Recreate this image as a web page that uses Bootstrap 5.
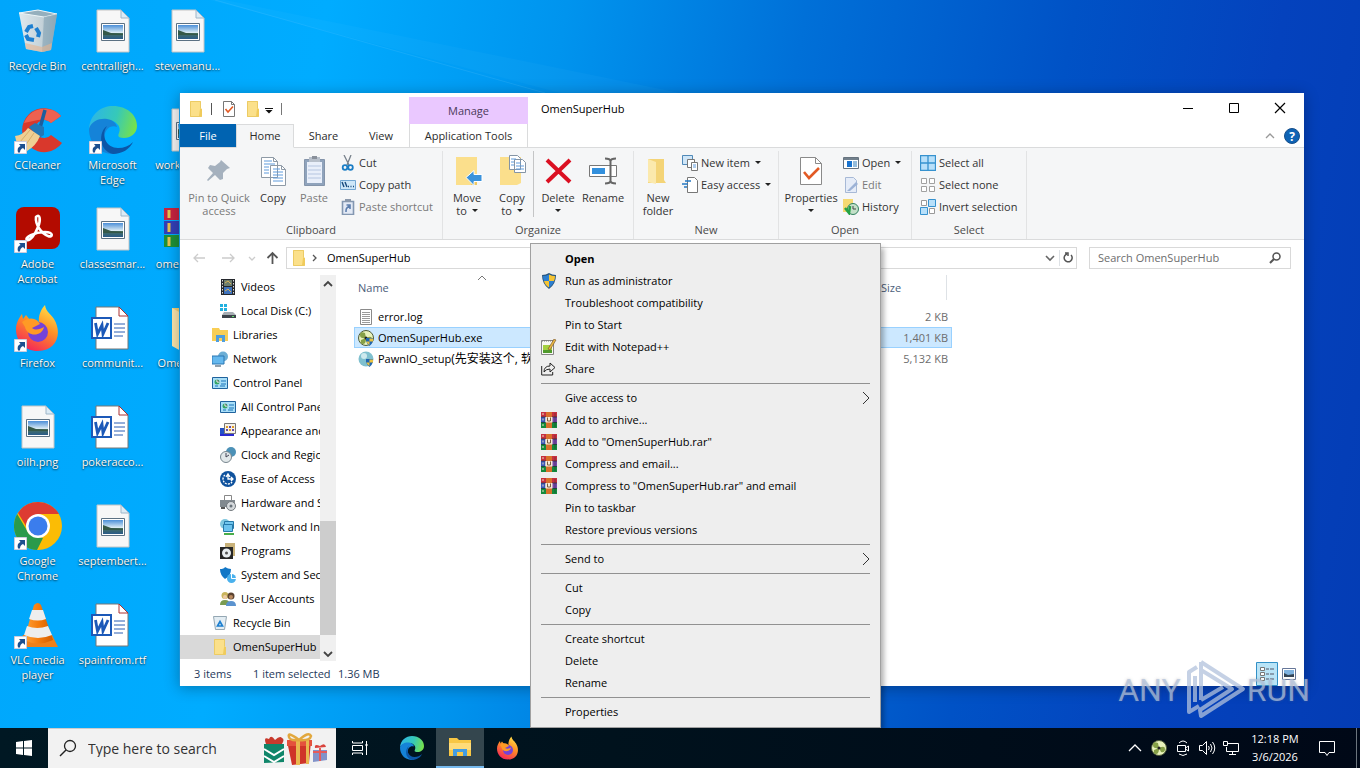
<!DOCTYPE html>
<html lang="en">
<head>
<meta charset="utf-8">
<meta name="viewport" content="width=device-width, initial-scale=1">
<title>Desktop</title>
<link rel="stylesheet" href="https://cdn.jsdelivr.net/npm/bootstrap@5.3.0/dist/css/bootstrap.min.css">
<script src="https://cdn.jsdelivr.net/npm/bootstrap@5.3.0/dist/js/bootstrap.bundle.min.js"></script>
<style>
:root{--line:#dadbdc;--ribbon:#f5f6f7}
body{font-family:"Open Sans","Noto Sans","Noto Sans CJK SC",sans-serif;font-size:11px;line-height:16px;color:#000;height:100vh;overflow:hidden;
 background:linear-gradient(100deg,#00a6fb 0%,#00acff 22%,#0094ee 38%,#0070d8 54%,#0052c6 72%,#0442bd 86%,#043cb4 100%)}
button,input{font:inherit;color:inherit;border:0;background:none;padding:0;border-radius:0}
svg{display:block;flex:none;overflow:visible}
a{color:inherit;text-decoration:none}
.s16{width:16px;height:16px}.s24{width:24px;height:24px}.s32{width:32px;height:32px}.s48{width:48px;height:48px}
.beam{position:absolute;inset:0;width:100%;height:100%}
.desk-icons{display:grid;grid-auto-flow:column;grid-template-rows:repeat(7,99px);grid-auto-columns:75px;padding-top:7px;width:225px}
.desk-icons a{display:flex;flex-direction:column;align-items:center;gap:3px;color:#fff;line-height:15px;text-align:center;text-shadow:0 1px 2px rgba(0,0,0,.7),0 0 1px rgba(0,0,0,.4)}
.pic-wrap{position:relative}
.arrow-mark{position:absolute;left:0;bottom:0;width:13px;height:13px}
.win{position:absolute;left:179px;right:56px;top:93px;bottom:82px;background:#fff;border-left:1px solid #1a93d8;box-shadow:0 2px 14px rgba(0,0,0,.3)}
.title-row{height:31px;padding-right:1px}
.quick{width:229px}
.manage-tab{width:119px;height:27px;background:#eac8ff;color:#4b3a5a;line-height:28px}
.win-title{padding-left:13px}
.cap-btn{width:46px;height:30px;display:grid;place-items:center}
.tab-row{height:24px;border-bottom:1px solid var(--line)}
.tab-row button{height:24px;color:#2b2b2b}
.tab-row .file-tab{background:#0063b1;color:#fff;width:56px;height:23px}
.tab-row .home-tab{width:58px;background:var(--ribbon);border:1px solid var(--line);border-bottom-color:var(--ribbon)}
.tab-row .share-tab{width:59px}.tab-row .view-tab{width:56px}
.tab-row .tools-tab{width:119px;border:solid var(--line);border-width:0 1px}
.ribbon{background:var(--ribbon);height:92px;border-bottom:1px solid var(--line);color:#333}
.rgroup{border-right:1px solid #e2e3e4;margin-top:3px;display:flex;flex-direction:column;justify-content:space-between}
.rgroup>span{text-align:center;color:#4a4a4a;line-height:18px}
.g-clip{width:263px}.g-org{width:191px}.g-new{width:145px}.g-open{width:133px}.g-sel{width:115px}
.w30{width:30px}.w42{width:42px}.w48{width:48px}.w52{width:52px}.w64{width:64px}.w78{width:78px}
.big{line-height:13px;display:flex;flex-direction:column;align-items:center;gap:4px;padding-top:4px;color:#333;white-space:nowrap}
.smalls{padding-top:1px}
.sm{display:flex;align-items:center;gap:3px;height:22px;white-space:nowrap}
.caret{display:inline-block;border:3px solid transparent;border-top-color:#222;border-bottom:0;vertical-align:3px;margin-left:5px}
.dim,.big.dim{color:#7a7a7a}
.addr-row{height:35px;padding:0 13px 0 8px}
.nav-btns{width:98px}
.addr{height:22px;border:1px solid #d9d9d9}
.find-box{width:202px;margin-left:12px}
.find-box input{width:150px}
.nav-pane{width:140px;overflow:hidden}
.nav-pane a{display:flex;align-items:center;gap:5px;height:24px;padding-left:32px;white-space:nowrap}
.nav-pane a.sub{padding-left:40px}
.nav-pane a.here{background:#d9d9d9}
.sbar{width:16px;background:#f0f0f0}
.sbar i{display:block;background:#cdcdcd;height:114px}
.file-pane{padding-left:18px}
.files{width:598px;table-layout:fixed;border-collapse:separate;border-spacing:0}
.files .c-name{width:240px}.files .c-size{width:76px}
.files th{font-weight:400;color:#4c607a;height:31px;padding:0 5px;line-height:25px;vertical-align:top}
.files td{height:21px;padding:0 3px;border:1px solid transparent;line-height:19px;white-space:nowrap}
.files td svg{align-self:center}
.files td+td{color:#6d6d6d}
.files .sel td{background:#cce8ff;border-color:#99d1ff}
.files .sel td+td{border-left:0}.files .sel td:not(:last-child){border-right:0}
.han{font-size:12px}
.status{height:25px;color:#1e395b;padding-left:14px}
.count{width:59px}.chosen{width:85px}
.ctx{position:absolute;left:530px;bottom:40px;width:351px;background:#eee;border:1px solid #a0a0a0;padding:4px 0;box-shadow:4px 4px 5px -1px rgba(0,0,0,.3);z-index:5}
.ctx button{display:flex;align-items:center;width:100%;height:22px;padding:0 10px;text-align:left}
.ctx .ic{width:24px}
.ctx hr{margin:3px 10px;height:1px;border:0;background:#919191;opacity:1}
.taskbar{position:absolute;left:0;right:0;bottom:0;height:40px;background:linear-gradient(90deg,#001823,#00121d 45%,#000817);color:#fff;z-index:6}
.tsearch{width:288px;background:#f2f2f2;height:40px;border-top:1px solid #ccc;color:#333}
.tsearch input{width:172px;font-size:14px;outline:0}
.tsearch input::placeholder,.addr input::placeholder{color:#333;opacity:1}
.addr input::placeholder{color:#6d6d6d}
.tbtn{width:48px;height:40px;display:grid;place-items:center}
.tbtn.on{background:#34464e;border-bottom:2px solid #76b9ed}
.tray button{width:24px;height:40px;display:grid;place-items:center}
.tray .notify{width:40px;margin-right:9px}
.show-desk{width:4px}
.clock{width:64px;line-height:18px;text-align:center}
.mark-any{position:absolute;right:50px;bottom:46px;font:32px/64px Roboto,"Liberation Sans",sans-serif;color:rgba(178,194,220,.72);z-index:4;text-shadow:0 0 3px rgba(120,120,120,.35);pointer-events:none}
</style>
</head>
<body>
<svg width="0" height="0" class="position-absolute" aria-hidden="true"><defs>
<linearGradient id="gEdge" x1="0" x2="1" y1=".3" y2=".5"><stop offset="0" stop-color="#2cb5e8"/><stop offset=".55" stop-color="#36c9b8"/><stop offset="1" stop-color="#76e14b"/></linearGradient>
<linearGradient id="gFox" x1=".8" y1="0" x2=".3" y2="1"><stop offset="0" stop-color="#ffe34a"/><stop offset=".45" stop-color="#ff9125"/><stop offset="1" stop-color="#f4235a"/></linearGradient>
<linearGradient id="gSky" x2="0" y2="1"><stop offset="0" stop-color="#4b8fd8"/><stop offset=".55" stop-color="#dcecf4"/><stop offset=".6" stop-color="#46705f"/><stop offset="1" stop-color="#2a5b8a"/></linearGradient>
<linearGradient id="gCone" x2="1"><stop offset="0" stop-color="#ffa23a"/><stop offset=".5" stop-color="#f57c0d"/><stop offset="1" stop-color="#d35c00"/></linearGradient>
<linearGradient id="gBin" x2="1"><stop offset="0" stop-color="#dfe9ee"/><stop offset=".6" stop-color="#c4d2d9"/><stop offset="1" stop-color="#8fa7b4"/></linearGradient>
<symbol id="bin" viewBox="0 0 48 48"><path d="M5 6l19-3 19 4-6 36-9 2-16-3z" fill="url(#gBin)"/><path d="M5 6l19-3 19 4-13 3z" fill="#95afbd" stroke="#edf5f8"/><path d="M30 10l13-3-6 36-9 2z" fill="#8ba8b8" opacity=".7"/><path d="M11 36l17 4 10-4-1 7-9 2-16-3z" fill="#e6b48f" opacity=".6"/><g fill="none" stroke="#1d7fd0" stroke-width="4"><path d="M12 25l3-5 4-1M22 21l3 5-1 4M20 33l-6-1-2-4"/></g></symbol>
<symbol id="img" viewBox="0 0 48 48"><path d="M8 3h24l8 8v34H8z" fill="#f7f7f7" stroke="#c4c4c4"/><path d="M32 3v8h8z" fill="#dcebf5" stroke="#9fb6c8"/><path d="M12.500 16.500h23v17h-23z" fill="#fff" stroke="#5c7183"/><path d="M14 18h20v14H14z" fill="url(#gSky)"/><path d="M14 23l8 3 12 1v1H14z" fill="#355848"/></symbol>
<symbol id="doc" viewBox="0 0 48 48"><path d="M7 3h23l9 9v33H7z" fill="#fff" stroke="#777"/><path d="M30 3v9h9z" fill="#fff" stroke="#a33"/><path d="M25 20h11M25 24h11M25 28h11M25 32h9" stroke="#2b5fb4"/><path d="M3 14h19v20H3z" fill="#fff" stroke="#1c59b8" stroke-width="2"/><path d="M6.500 19l2 11 4.500-9 1 9 5-11" fill="none" stroke="#1c59b8" stroke-width="2.800"/></symbol>
<symbol id="shortcut" viewBox="0 0 13 13"><path d="M.5.5h12v12H.5z" fill="#fff" stroke="#ccd"/><path d="M4 11.500C3 8 4 6 6.500 5L5 3h6v6L9 7C7 8 6 9 6 11.500z" fill="#1c4f8f"/></symbol>
<symbol id="cc" viewBox="0 0 48 48"><path d="M47 10A22 22 0 1 0 48 37L37 29a9 9 0 1 1 0-12z" fill="#d9382c"/><path d="M47 10A22 22 0 0 0 10 17L24 14q8-2 13 3z" fill="#ee6150"/><path d="M31 4l-5 18" stroke="#1d5e9d" stroke-width="3.500"/><path d="M15 21l6-4 9 4 0 8-5 3z" fill="#2277b6"/><path d="M14 22l12 8q-4 10-13 15Q4 45 1 30q8-1 13-8z" fill="#efcf93"/><path d="M16 24L6 36M20 27l-9 13" stroke="#d8ae69"/></symbol>
<symbol id="edge" viewBox="0 0 48 48"><path d="M0 23C1 8 12 0 24 0c14 0 24 9 24 20 0 8-7 12-13 12-7 0-6-3-5-5 3-7-4-13-11-13C9 14 2 18 0 23z" fill="url(#gEdge)"/><path d="M0 23C2 15 11 12 18 13c6 1 9 4 10 8-8-3-14 5-12 13 2 7 6 11 11 14C11 49 0 38 0 23z" fill="#1583d8"/><path d="M18 20c-7 10 0 22 11 22 6 0 11-2 15-6-3 7-11 12-20 12C10 45 9 26 18 20z" fill="#0c56a7"/></symbol>
<symbol id="pdf" viewBox="0 0 48 48"><rect x="2" y="2" width="44" height="42" rx="8" fill="#b30b00"/><path d="M22 12c4-4 5 3 2 10-3 8-8 14-11 13-3-2 7-8 18-8 9 0 8 6 3 4-6-2-13-11-12-19z" fill="none" stroke="#fff" stroke-width="2.600"/></symbol>
<symbol id="fox" viewBox="0 0 48 48"><path d="M24 47C10 47 2 37 2 25c0-6 3-11 6-15l1 5 3-4 4 5c4 0 6 0 9 3-1-7 2-14 6-18 1 7 6 9 9 14 9 15 2 32-16 32z" fill="url(#gFox)"/><circle cx="24" cy="28" r="10" fill="#7542d8"/><path d="M8 18c8-6 15-4 18 2l-8 4c4 3 8 1 12-1-2 10-17 10-19 0z" fill="#ff9a25"/></symbol>
<symbol id="chrome" viewBox="0 0 48 48"><circle cx="24" cy="24" r="24" fill="#fbbc05"/><path d="M24 0a24 24 0 0 1 21 12H24L12 24 4 11A24 24 0 0 1 24 0z" fill="#dd3b32"/><path d="M3.200 12L15 32l14 4-6 12A24 24 0 0 1 3.200 12z" fill="#2a9a4b"/><circle cx="24" cy="24" r="12" fill="#fff"/><circle cx="24" cy="24" r="9.500" fill="#3b7ded"/></symbol>
<symbol id="cone" viewBox="0 0 48 48"><path d="M9 34h29l6 12H5z" fill="#f08018"/><path d="M20 4q4-4 7 0l12 35q-15 7-29 0z" fill="url(#gCone)"/><path d="M18 9h11l3 9q-8 3-17 0zM13 25q10 4 21 0l4 9q-14 6-28 0z" fill="#eee"/></symbol>
<symbol id="rar" viewBox="0 0 16 16"><path d="M0 0h16v5H0z" fill="#c7303f"/><path d="M0 5h4.500v5H0z" fill="#3a57b8"/><path d="M10.500 5H16v5h-5.500z" fill="#7546a8"/><path d="M0 10h16v6H0z" fill="#148a3c"/><path d="M0 5h16M0 10.500h16" stroke="#22303a" stroke-width=".7"/><path d="M2 1v14" stroke="#e8dfc0" stroke-dasharray="2 3.500"/><path d="M14 1v14" stroke="#17202a" opacity=".35"/><path d="M5 0h6v16H5z" fill="#d9702b"/><path d="M4.500 5h7v5.500h-7z" fill="#f6ead6"/><path d="M6.500 5.500V9h3V5.500" fill="none" stroke="#7a5a3c"/></symbol>
<symbol id="rarbig" viewBox="0 0 48 48"><path d="M0 3h36v12H0z" fill="#c72440"/><path d="M0 16h36v13H0z" fill="#343fb8"/><path d="M0 30h36v12H0z" fill="#1e9138"/><path d="M5 5v8M5 18v9M5 32v9" stroke="#e9c24f" stroke-width="3"/></symbol>
<symbol id="folder" viewBox="0 0 16 16"><path d="M2 0h11v7l1 1v8H2z" fill="#fbe08a"/><path d="M2.500.5h10v7l1 1v7h-11z" fill="none" stroke="#eccb64"/><path d="M12 8h2v7h-3z" fill="#f0cb5b"/></symbol>
<symbol id="foldbig" viewBox="0 0 48 48"><path d="M8 4h32v34l4 4H14z" fill="#f2ce74"/><path d="M8 4l9 5v38l-9-5z" fill="#fbe6ac"/></symbol>
<symbol id="check" viewBox="0 0 16 16"><path d="M2.500.5h8l3 3v12h-11z" fill="#fff" stroke="#777"/><path d="M10.500.5v3h3" fill="none" stroke="#777"/><path d="M4.500 8l2.500 3L12 5.500" fill="none" stroke="#e25a24" stroke-width="1.600"/></symbol>
<symbol id="checkbig" viewBox="0 0 32 32"><path d="M5.500 2.500h15l6 6v21h-21z" fill="#fff" stroke="#8a8a8a"/><path d="M20.500 2.500v6h6" fill="none" stroke="#8a8a8a"/><path d="M9 17l5 6 10-10" fill="none" stroke="#e25a24" stroke-width="2.600"/></symbol>
<symbol id="pin" viewBox="0 0 32 32"><path d="M18 5l9 8-3 1-4 4v6l-3 1-5-5-7 6-1-1 6-7-5-5 2-3 5 1 5-4z" fill="#a5b1be"/></symbol>
<symbol id="copy" viewBox="0 0 32 32"><g fill="#fff" stroke="#8e9aa6"><path d="M4.500 2.500h12l4 4v16h-16zM13.500 10.500h11l4 4v16h-15z"/><path d="M16.500 2.500v4h4M24.500 10.500v4h4" fill="none"/></g><path d="M7 6h8M7 9h11M7 12h5M7 15h5M7 18h5M16 14h7M16 17h10M16 20h10M16 23h10M16 26h10" stroke="#5f9bdc"/></symbol>
<symbol id="paste" viewBox="0 0 32 32"><path d="M6.500 4.500h20v26h-20z" fill="#8fa3bc" stroke="#8494aa"/><path d="M9 7h15v21H9z" fill="#e9effa"/><path d="M11 2h11v5H11z" fill="#b7bfca"/><path d="M14 1h5v3h-5z" fill="#888f9a"/><path d="M10 11h13M10 15h13M10 19h13M10 23h13" stroke="#b5c5e0"/></symbol>
<symbol id="cut" viewBox="0 0 16 16"><path d="M4 0l5 10M11 0L7 10" stroke="#77818b" stroke-width="1.300"/><circle cx="5" cy="12.500" r="2.300" fill="none" stroke="#1c7ec5" stroke-width="1.800"/><circle cx="10.500" cy="12.500" r="2.300" fill="none" stroke="#1c7ec5" stroke-width="1.800"/></symbol>
<symbol id="path" viewBox="0 0 16 16"><path d="M.5 3.500h15v9H.5z" fill="#cde7f8" stroke="#72a7d2"/><path d="M2 5l2 5M5 5l2 5M8 9.500h1M10.500 9.500h1M13 9.500h1" stroke="#174a7c" stroke-width="1.400"/></symbol>
<symbol id="psc" viewBox="0 0 16 16"><path d="M2.500 2.500h11v13h-11z" fill="#e2e9f5" stroke="#8397b1" stroke-width="1.600"/><path d="M5 0h6v3H5z" fill="#8a98ab"/><path d="M6 13c0-3 0-4 3.500-6M6.500 6H10v4" fill="none" stroke="#5e7fae" stroke-width="1.600"/></symbol>
<symbol id="move" viewBox="0 0 32 32"><path d="M5 2h21v26l-4 2H5z" fill="#fbdf8c"/><path d="M22 25h4v5h-6z" fill="#eec862"/><path d="M15 22.500l8-7v4h8v7h-8v4z" fill="#3a92dc" stroke="#fff"/></symbol>
<symbol id="copyto" viewBox="0 0 32 32"><path d="M4 2h21v26l-4 2H4z" fill="#fbdf8c"/><g fill="#fff" stroke="#8494a5"><path d="M13.500.5h8l3 3v11h-11zM18.500 4.500h8l3 3v10h-11z"/></g><path d="M15 4h5M15 7h3M15 10h3M20 8h5M20 11h8M20 14h8" stroke="#5f9bdc"/></symbol>
<symbol id="del" viewBox="0 0 32 32"><path d="M5 5l23 22M28 5L5 27" stroke="#db1022" stroke-width="4"/></symbol>
<symbol id="ren" viewBox="0 0 32 32"><path d="M2.500 10.500h27v11h-27z" fill="#fff" stroke="#777"/><path d="M5 13h13v6H5z" fill="#3390dd"/><path d="M23.500 5v22M18 3.500q5 0 5.500 2.500.5-2.500 5.500-2.500M18 28.500q5 0 5.500-2.500.5 2.500 5.500 2.500" fill="none" stroke="#666" stroke-width="2"/></symbol>
<symbol id="newf" viewBox="0 0 32 32"><path d="M6 4h16v21l2 3H6z" fill="#f4d477"/><path d="M6 4l8 3v22l-8-2z" fill="#fbe9ad"/></symbol>
<symbol id="newi" viewBox="0 0 16 16"><path d="M.5.5h10v9H.5z" fill="#cfe6f8" stroke="#5089b8"/><path d="M5.500 4.500h7v8h-7z" fill="#fff" stroke="#777"/><path d="M9.500 7.500h6v8h-6z" fill="#fff" stroke="#777"/><path d="M11 10h3M11 12h3" stroke="#5f9bdc"/></symbol>
<symbol id="easy" viewBox="0 0 16 16"><path d="M5.500.5h7l3 3v12h-10z" fill="#fff" stroke="#777"/><path d="M0 7h6M3 4h6M2 10h3" stroke="#2478c2" stroke-width="1.500"/></symbol>
<symbol id="opn" viewBox="0 0 16 16"><path d="M.5 2.500h15v11H.5z" fill="#fff" stroke="#66737f"/><path d="M1 3h14v2H1z" fill="#72808c"/><path d="M4 6h5v6H4z" fill="#1973cf"/><path d="M10 7h4M10 9h4M10 11h4" stroke="#2b7ab9"/></symbol>
<symbol id="edit" viewBox="0 0 16 16"><path d="M2.500.5h8l3 3v12h-11z" fill="#e5ecf8" stroke="#a7b9d6"/><path d="M4 14l9-9 2 2-8 7z" fill="#9cb2d6"/></symbol>
<symbol id="hist" viewBox="0 0 16 16"><path d="M0 0h10v13H0z" fill="#f5d972"/><circle cx="10" cy="10" r="5.500" fill="#c3e0c8" stroke="#31805f"/><path d="M2 9l4 5 1-7" fill="none" stroke="#24a245" stroke-width="2.500"/><path d="M10 7v3h3" fill="none" stroke="#444"/></symbol>
<symbol id="sall" viewBox="0 0 16 16"><path d="M.5.5h15v15H.5zM8 1v14M1 8h14" fill="#b8e0fa" stroke="#3692cf" stroke-width="1.300"/></symbol>
<symbol id="snone" viewBox="0 0 16 16"><path d="M1.500 1.500h5v5h-5zM9.500 1.500h5v5h-5zM1.500 9.500h5v5h-5zM9.500 9.500h5v5h-5z" fill="#fff" stroke="#a1a1a1"/></symbol>
<symbol id="sinv" viewBox="0 0 16 16"><path d="M1.500 1.500h5v5h-5zM9.500 9.500h5v5h-5z" fill="#fff" stroke="#999"/><path d="M8.500.5h7v7h-7zM.5 8.500h7v7h-7z" fill="#b8e0fa" stroke="#3692cf"/></symbol>
<symbol id="video" viewBox="0 0 16 16"><path d="M1 0h14v16H1z" fill="#25282d"/><path d="M2.500 1v14M13.500 1v14" stroke="#ddd" stroke-dasharray="1.500 1.500"/><path d="M4 1h8v6H4z" fill="#6c7d6d"/><path d="M4 8h8v7H4z" fill="#3f73bd"/><path d="M5 4l3-2 3 3M5 12l3-2 3 3" stroke="#d8b258" fill="none"/></symbol>
<symbol id="disk" viewBox="0 0 16 16"><path d="M0 1h3v3H0zM4 1h3v3H4zM0 5h3v3H0zM4 5h3v3H4z" fill="#22b0df"/><path d="M4 9h9l3 3v3H2v-3z" fill="#a6adb3"/><path d="M2 12h14v3H2z" fill="#3d444b"/><path d="M12 13.500h2" stroke="#62e269"/></symbol>
<symbol id="lib" viewBox="0 0 16 16"><path d="M0 1h7l1 2h8v11H0z" fill="#f9ce55"/><path d="M4 15V8h9v7h-3v-4H7v4z" fill="#4f9ede"/></symbol>
<symbol id="net" viewBox="0 0 16 16"><circle cx="11" cy="5.500" r="5" fill="#6caed5"/><path d="M0 5h12v8H0z" fill="#65b8ee" stroke="#2b77b3"/><path d="M3 15h6" stroke="#6c8090" stroke-width="1.500"/></symbol>
<symbol id="cp" viewBox="0 0 16 16"><path d="M.5 2.500h15v11H.5z" fill="#a8def8" stroke="#20639d"/><circle cx="5" cy="7" r="2.500" fill="#37a568"/><path d="M5 4.500V7h2.500" stroke="#fff"/><path d="M9 6h5M9 9h5M3 11h3M8 11h5" stroke="#1a74b9"/></symbol>
<symbol id="look" viewBox="0 0 16 16"><path d="M0 5h11v8H0z" fill="#2351c6"/><path d="M4.500.5h11v10h-11z" fill="#f5f2e8" stroke="#777"/><path d="M6 3h2v2H6zM12 3h2v2h-2zM9 6h2v2H9z" fill="#e39b27"/><path d="M9 3h2v2H9zM6 6h2v2H6zM12 6h2v2h-2z" fill="#654aa8"/><path d="M0 12h14" stroke="#2a2ad0" stroke-width="2"/></symbol>
<symbol id="clk" viewBox="0 0 16 16"><circle cx="11" cy="5" r="5" fill="#4c91b7"/><circle cx="6" cy="10" r="5.500" fill="#e2e8ea" stroke="#77868e"/><path d="M6 6v4l3-2" fill="none" stroke="#445"/></symbol>
<symbol id="ease" viewBox="0 0 16 16"><circle cx="8" cy="8" r="8" fill="#0f529d"/><path d="M8 3v5h5M11 6l2 2-2 2M6 6L8 3l2 3" fill="none" stroke="#fff" stroke-width="1.300"/><path d="M5 4a5 5 0 1 0 7 7" fill="none" stroke="#fff" stroke-dasharray="2 1" stroke-width="1.400"/></symbol>
<symbol id="hw" viewBox="0 0 16 16"><path d="M4.500.5h7v6h-7z" fill="#fff" stroke="#888"/><path d="M0 5h15v7H0z" fill="#81898f"/><circle cx="11" cy="11" r="4.500" fill="#d5d9dc" stroke="#72787d"/><circle cx="11" cy="11" r="1.500" fill="#69737b"/><path d="M1 13h4" stroke="#555" stroke-width="2"/></symbol>
<symbol id="ni" viewBox="0 0 16 16"><circle cx="5" cy="5" r="5" fill="#81c8df"/><path d="M4.500 2.500h9v7h-9z" fill="#71c6ee" stroke="#267aaa"/><path d="M3.500 5.500h9v7h-9z" fill="#6cc3ee" stroke="#267aaa"/><path d="M4 15h10" stroke="#49ad49" stroke-width="2"/></symbol>
<symbol id="prog" viewBox="0 0 16 16"><path d="M5 0h10v13H5z" fill="#c9b27a"/><path d="M0 4h13v12H0z" fill="#262626"/><circle cx="6.500" cy="10" r="4.500" fill="#e9eef1"/><circle cx="6.500" cy="10" r="1.500" fill="#555"/></symbol>
<symbol id="sec" viewBox="0 0 16 16"><path d="M0 2q4 0 5-2 3 2 6 2 0 7-6 10Q0 8 0 2z" fill="#1277c6"/><circle cx="11.500" cy="11.500" r="4.500" fill="#4ab1ed"/><path d="M11.500 7v4.500H16" fill="none" stroke="#fff"/></symbol>
<symbol id="usr" viewBox="0 0 16 16"><circle cx="5" cy="4.500" r="3.500" fill="#c9b55d"/><circle cx="11" cy="5" r="3.500" fill="#5b4331"/><circle cx="5" cy="6" r="2" fill="#edc9a3"/><circle cx="11" cy="6" r="2" fill="#b98a60"/><path d="M0 14q0-5 5-5t5 5z" fill="#7a9c52"/><path d="M6 15q0-5 5-5t5 5z" fill="#5b93cf"/></symbol>
<symbol id="bins" viewBox="0 0 16 16"><path d="M1.500 1.500h13l-2 13h-9z" fill="#e3edf3" stroke="#94a7b3"/><path d="M5.500 11L8 6.500l2.500 4.500z" fill="none" stroke="#1d7fd0" stroke-width="1.700"/></symbol>
<symbol id="log" viewBox="0 0 16 16"><path d="M2.500.5h11v15h-11z" fill="#fff" stroke="#8a8a8a"/><path d="M4 3.500h8M4 5.500h8M4 7.500h8M4 9.500h8M4 11.500h8M4 13.500h8" stroke="#9a9a9a"/></symbol>
<symbol id="fan" viewBox="0 0 16 16"><circle cx="8" cy="8" r="7.500" fill="#e8f2bc" stroke="#4d5a39"/><path d="M8 8Q2 9 2 5t5-2zM8 8q6-3 6 1t-4 3zM8 8q0 6-3 6t-2-4z" fill="#85a047"/><circle cx="8" cy="8" r="1.500" fill="#222"/></symbol>
<symbol id="uac" viewBox="0 0 16 16"><path d="M8 8h7v3q-1 3-3.500 5Q9 14 8 11z" fill="#1f65b0"/><path d="M11.500 8.500H15v3h-3.500zM8.300 11.500h3.200V15q-2-1-3.200-3.500z" fill="#e8c243"/></symbol>
<symbol id="shield" viewBox="0 0 16 16"><path d="M8 0Q5 2 1 2q0 9 7 14 7-5 7-14-4 0-7-2z" fill="#28567f"/><path d="M8 1.500Q5 3 2 3q0 3 1 5h5z" fill="#2d7fd0"/><path d="M8 1.500Q11 3 14 3q0 3-1 5H8zM3 8h5v6.500Q4 12 3 8z" fill="#f6c433"/><path d="M8 8h5q-1 4-5 6.500z" fill="#2d7fd0"/></symbol>
<symbol id="npp" viewBox="0 0 16 16"><path d="M.5 1.500h12v14H.5z" fill="#f8f8f4" stroke="#858585"/><path d="M2 6h9v8H2z" fill="#a4d03f"/><path d="M2 11h9v3H2z" fill="#4f9a2c"/><path d="M1 2h11" stroke="#777" stroke-dasharray="1 1"/><path d="M7 10l6-10 2 1-6 10z" fill="#e8b743" stroke="#714d26" stroke-width=".6"/></symbol>
<symbol id="share" viewBox="0 0 16 16"><path d="M.7 5v9h11v-3" fill="none" stroke="#222"/><path d="M3 11q0-6 6-6V2l5 4.500L9 11V8Q5 8 3 11z" fill="none" stroke="#222"/></symbol>
<symbol id="explore" viewBox="0 0 24 24"><path d="M1 3h8l2 2h12v16H1z" fill="#f8c744"/><path d="M1 8h22v7H1z" fill="#ffdc79"/><path d="M5 21v-7h14v7h-4v-4H9v4z" fill="#429ce0"/></symbol>
</defs></svg>
<svg class="beam" viewBox="0 0 1360 768" preserveAspectRatio="none" aria-hidden="true"><path d="M210 0L560 93H680L225 0z" fill="#7fd0ff" opacity=".05"/><path d="M215 0L545 93" stroke="#9bdcff" opacity=".12"/></svg>

<main class="desk-icons position-relative">
<a href="#"><svg class="s48"><use href="#bin"/></svg><span>Recycle Bin</span></a>
<a href="#"><div class="pic-wrap"><svg class="s48"><use href="#cc"/></svg><svg class="arrow-mark"><use href="#shortcut"/></svg></div><span>CCleaner</span></a>
<a href="#"><div class="pic-wrap"><svg class="s48"><use href="#pdf"/></svg><svg class="arrow-mark"><use href="#shortcut"/></svg></div><span>Adobe<br>Acrobat</span></a>
<a href="#"><div class="pic-wrap"><svg class="s48"><use href="#fox"/></svg><svg class="arrow-mark"><use href="#shortcut"/></svg></div><span>Firefox</span></a>
<a href="#"><svg class="s48"><use href="#img"/></svg><span>oilh.png</span></a>
<a href="#"><div class="pic-wrap"><svg class="s48"><use href="#chrome"/></svg><svg class="arrow-mark"><use href="#shortcut"/></svg></div><span>Google<br>Chrome</span></a>
<a href="#"><div class="pic-wrap"><svg class="s48"><use href="#cone"/></svg><svg class="arrow-mark"><use href="#shortcut"/></svg></div><span>VLC media<br>player</span></a>
<a href="#"><svg class="s48"><use href="#img"/></svg><span>centralligh...</span></a>
<a href="#"><div class="pic-wrap"><svg class="s48"><use href="#edge"/></svg><svg class="arrow-mark"><use href="#shortcut"/></svg></div><span>Microsoft<br>Edge</span></a>
<a href="#"><svg class="s48"><use href="#img"/></svg><span>classesmar...</span></a>
<a href="#"><svg class="s48"><use href="#doc"/></svg><span>communit...</span></a>
<a href="#"><svg class="s48"><use href="#doc"/></svg><span>pokeracco...</span></a>
<a href="#"><svg class="s48"><use href="#img"/></svg><span>septembert...</span></a>
<a href="#"><svg class="s48"><use href="#doc"/></svg><span>spainfrom.rtf</span></a>
<a href="#"><svg class="s48"><use href="#img"/></svg><span>stevemanu...</span></a>
<a href="#"><svg class="s48"><use href="#img"/></svg><span>workshops...</span></a>
<a href="#"><svg class="s48"><use href="#rarbig"/></svg><span>omensupe...</span></a>
<a href="#"><svg class="s48"><use href="#foldbig"/></svg><span>OmenSup...</span></a>
</main>

<section class="win d-flex flex-column" aria-label="OmenSuperHub">
 <header class="title-row d-flex">
  <div class="quick d-flex align-items-center gap-1 ps-2">
   <svg class="s16"><use href="#folder"/></svg>
   <svg width="9" height="16" viewBox="0 0 9 16"><path d="M3.500 2v12" stroke="#555"/></svg>
   <button aria-label="Properties"><svg class="s16"><use href="#check"/></svg></button>
   <button class="ms-1" aria-label="New folder"><svg class="s16"><use href="#folder"/></svg></button>
   <button aria-label="Customize"><svg width="12" height="16" viewBox="0 0 12 16"><path d="M0 7.500h8" stroke="#111"/><path d="M.5 9h7L4 12.500z" fill="#111"/></svg></button>
   <svg width="2" height="16" viewBox="0 0 2 16"><path d="M.5 2v12" stroke="#777"/></svg>
  </div>
  <div class="manage-tab align-self-end text-center">Manage</div>
  <div class="win-title align-self-center flex-grow-1">OmenSuperHub</div>
  <button class="cap-btn" aria-label="Minimize"><svg class="s16" viewBox="0 0 16 16"><path d="M3 8.500h10" stroke="#000"/></svg></button>
  <button class="cap-btn" aria-label="Maximize"><svg class="s16" viewBox="0 0 16 16"><path d="M3.500 3.500h9v9h-9z" fill="none" stroke="#000"/></svg></button>
  <button class="cap-btn" aria-label="Close"><svg class="s16" viewBox="0 0 16 16"><path d="M3 3l10 10M13 3L3 13" stroke="#000" stroke-width="1.200"/></svg></button>
 </header>
 <nav class="tab-row d-flex">
  <button class="file-tab">File</button><button class="home-tab">Home</button>
  <button class="share-tab">Share</button><button class="view-tab">View</button>
  <button class="tools-tab">Application Tools</button>
  <div class="ms-auto d-flex align-items-center gap-2 pe-1">
   <button aria-label="Collapse ribbon"><svg class="s16" viewBox="0 0 16 16"><path d="M6 10l4-4 4 4" fill="none" stroke="#999" stroke-width="1.300"/></svg></button>
   <button aria-label="Help"><svg class="s16" viewBox="0 0 16 16"><circle cx="8" cy="8" r="7.500" fill="#0e63b5" stroke="#174e8a"/><text x="8" y="12.500" text-anchor="middle" font-size="12" font-weight="700" fill="#fff">?</text></svg></button>
  </div>
 </nav>
 <div class="ribbon d-flex">
  <div class="rgroup g-clip"><div class="d-flex">
   <button class="big dim w78"><svg class="s32"><use href="#pin"/></svg><span>Pin to Quick<br>access</span></button>
   <button class="big w30"><svg class="s32"><use href="#copy"/></svg><span>Copy</span></button>
   <button class="big dim w52"><svg class="s32"><use href="#paste"/></svg><span>Paste</span></button>
   <div class="smalls"><button class="sm"><svg class="s16"><use href="#cut"/></svg>Cut</button><button class="sm"><svg class="s16"><use href="#path"/></svg>Copy path</button><button class="sm dim"><svg class="s16"><use href="#psc"/></svg>Paste shortcut</button></div>
  </div><span>Clipboard</span></div>
  <div class="rgroup g-org"><div class="d-flex">
   <button class="big w48"><svg class="s32"><use href="#move"/></svg><span>Move<br>to<i class="caret"></i></span></button>
   <button class="big w42"><svg class="s32"><use href="#copyto"/></svg><span>Copy<br>to<i class="caret"></i></span></button>
   <div class="vr opacity-25"></div>
   <button class="big w48"><svg class="s32"><use href="#del"/></svg><span>Delete<br><i class="caret m-0"></i></span></button>
   <button class="big w42"><svg class="s32"><use href="#ren"/></svg><span>Rename</span></button>
  </div><span>Organize</span></div>
  <div class="rgroup g-new"><div class="d-flex">
   <button class="big w48"><svg class="s32"><use href="#newf"/></svg><span>New<br>folder</span></button>
   <div class="smalls"><button class="sm"><svg class="s16"><use href="#newi"/></svg><span>New item<i class="caret"></i></span></button><button class="sm"><svg class="s16"><use href="#easy"/></svg><span>Easy access<i class="caret"></i></span></button></div>
  </div><span>New</span></div>
  <div class="rgroup g-open"><div class="d-flex">
   <button class="big w64"><svg class="s32"><use href="#checkbig"/></svg><span>Properties<br><i class="caret m-0"></i></span></button>
   <div class="smalls"><button class="sm"><svg class="s16"><use href="#opn"/></svg><span>Open<i class="caret"></i></span></button><button class="sm dim"><svg class="s16"><use href="#edit"/></svg>Edit</button><button class="sm"><svg class="s16"><use href="#hist"/></svg>History</button></div>
  </div><span>Open</span></div>
  <div class="rgroup g-sel"><div class="smalls ps-2">
   <button class="sm"><svg class="s16"><use href="#sall"/></svg>Select all</button><button class="sm"><svg class="s16"><use href="#snone"/></svg>Select none</button><button class="sm"><svg class="s16"><use href="#sinv"/></svg>Invert selection</button>
  </div><span>Select</span></div>
 </div>
 <div class="addr-row d-flex align-items-center">
  <div class="nav-btns d-flex align-items-center">
   <svg width="24" height="16" viewBox="0 0 24 16"><path d="M17 8H6M10 4L6 8l4 4" fill="none" stroke="#ccc" stroke-width="1.300"/></svg>
   <svg width="32" height="16" viewBox="0 0 32 16"><path d="M10 8h12M18 4l4 4-4 4" fill="none" stroke="#ccc" stroke-width="1.300"/></svg>
   <svg width="16" height="16" viewBox="0 0 16 16"><path d="M5 7l3 3 3-3" fill="none" stroke="#ccc" stroke-width="1.300"/></svg>
   <svg width="24" height="16" viewBox="0 0 24 16"><path d="M12.500 14V3M7.500 8l5-5 5 5" fill="none" stroke="#555" stroke-width="1.800"/></svg>
  </div>
  <div class="addr d-flex align-items-center flex-grow-1">
   <svg class="s16 ms-1"><use href="#folder"/></svg>
   <svg class="s16" viewBox="0 0 16 16"><path d="M6 5l3 3-3 3" fill="none" stroke="#555" stroke-width="1.300"/></svg>
   <a href="#" class="ms-1 flex-grow-1">OmenSuperHub</a>
   <button aria-label="Previous locations"><svg class="s16" viewBox="0 0 16 16"><path d="M3 6l4 4 4-4" fill="none" stroke="#666" stroke-width="1.600"/></svg></button>
   <button class="border-start" aria-label="Refresh"><svg class="s16" viewBox="0 0 16 16"><path d="M11 5a4 4 0 1 1-4-1M5 3h3v3" fill="none" stroke="#555" stroke-width="1.500"/></svg></button>
  </div>
  <label class="addr find-box d-flex align-items-center px-2"><input class="flex-grow-1" aria-label="Search" placeholder="Search OmenSuperHub"><svg width="14" height="14" viewBox="0 0 14 14"><circle cx="8.500" cy="5.500" r="3.500" fill="none" stroke="#555" stroke-width="1.500"/><path d="M6 8l-4 4" stroke="#555" stroke-width="2"/></svg></label>
 </div>
 <div class="d-flex flex-grow-1">
  <nav class="nav-pane">
   <a class="sub" href="#"><svg class="s16"><use href="#video"/></svg>Videos</a>
   <a class="sub" href="#"><svg class="s16"><use href="#disk"/></svg>Local Disk (C:)</a>
   <a href="#"><svg class="s16"><use href="#lib"/></svg>Libraries</a>
   <a href="#"><svg class="s16"><use href="#net"/></svg>Network</a>
   <a href="#"><svg class="s16"><use href="#cp"/></svg>Control Panel</a>
   <a class="sub" href="#"><svg class="s16"><use href="#cp"/></svg>All Control Panel Items</a>
   <a class="sub" href="#"><svg class="s16"><use href="#look"/></svg>Appearance and Personalization</a>
   <a class="sub" href="#"><svg class="s16"><use href="#clk"/></svg>Clock and Region</a>
   <a class="sub" href="#"><svg class="s16"><use href="#ease"/></svg>Ease of Access</a>
   <a class="sub" href="#"><svg class="s16"><use href="#hw"/></svg>Hardware and Sound</a>
   <a class="sub" href="#"><svg class="s16"><use href="#ni"/></svg>Network and Internet</a>
   <a class="sub" href="#"><svg class="s16"><use href="#prog"/></svg>Programs</a>
   <a class="sub" href="#"><svg class="s16"><use href="#sec"/></svg>System and Security</a>
   <a class="sub" href="#"><svg class="s16"><use href="#usr"/></svg>User Accounts</a>
   <a href="#"><svg class="s16"><use href="#bins"/></svg>Recycle Bin</a>
   <a class="here" href="#"><svg class="s16"><use href="#folder"/></svg>OmenSuperHub</a>
  </nav>
  <div class="sbar d-flex flex-column align-items-center"><svg class="s16" viewBox="0 0 16 16"><path d="M4 11l4-4 4 4" fill="none" stroke="#444" stroke-width="1.800"/></svg><i class="mt-auto w-100"></i><svg width="16" height="26" viewBox="0 0 16 26"><path d="M4 17l4 4 4-4" fill="none" stroke="#444" stroke-width="1.800"/></svg></div>
  <div class="file-pane flex-grow-1">
   <table class="files">
    <colgroup><col class="c-name"><col><col><col class="c-size"></colgroup>
    <thead><tr><th class="ps-1 position-relative">Name<svg class="position-absolute top-0 start-50" width="16" height="6" viewBox="0 0 16 6"><path d="M4 5l4-4 4 4" fill="none" stroke="#777"/></svg></th><th></th><th></th><th><div class="border-end">Size</div></th></tr></thead>
    <tbody>
    <tr><td><div class="d-flex gap-1"><svg class="s16"><use href="#log"/></svg>error.log</div></td><td></td><td></td><td class="text-end">2 KB</td></tr>
    <tr class="sel"><td><div class="d-flex gap-1"><svg class="s16"><use href="#fan"/><use href="#uac"/></svg>OmenSuperHub.exe</div></td><td></td><td></td><td class="text-end">1,401 KB</td></tr>
    <tr><td><div class="d-flex gap-1"><svg class="s16" viewBox="0 0 16 16"><circle cx="8" cy="8" r="7.500" fill="#7fc0cf"/><circle cx="6" cy="5" r="3" fill="#cde9ee"/><use href="#uac"/></svg><span>PawnIO_setup<span class="han">(先安装这个, 软</span></span></div></td><td></td><td></td><td class="text-end">5,132 KB</td></tr>
    </tbody>
   </table>
  </div>
 </div>
 <footer class="status d-flex align-items-center">
  <span class="count">3 items</span><span class="chosen">1 item selected</span><span>1.36 MB</span>
  <div class="ms-auto d-flex align-items-center gap-1 pe-2">
   <button aria-label="Details view"><svg width="22" height="24" viewBox="0 0 22 24"><path d="M.5.5h21v23H.5z" fill="#b9e4f7" stroke="#3290c6"/><g fill="#fff" stroke="#777"><path d="M4.500 5.500h4v3h-4zM4.500 10.500h4v3h-4zM4.500 15.500h4v3h-4z"/></g><path d="M10 7h3M14 7h4M10 12h3M14 12h4M10 17h3M14 17h4" stroke="#556"/></svg></button>
   <button aria-label="Large icons"><svg width="14" height="12" viewBox="0 0 14 12"><path d="M.5.5h13v11H.5z" fill="#fff" stroke="#679"/><path d="M2 2h10v6H2z" fill="#7eb2df"/><path d="M2 5l4 2 6-1v3H2z" fill="#345"/></svg></button>
  </div>
 </footer>
</section>

<div class="mark-any d-flex align-items-center" aria-hidden="true"><span>ANY</span><svg width="66" height="64" viewBox="2 0 66 64"><g fill="none" stroke="#b2c2dc" stroke-opacity=".75" stroke-width="4" stroke-linejoin="round"><path d="M22 4v38M22 4l42 27-42 27-1-6 32-21L22 12M22 42l22-13"/><path d="M18 9l-8 5v40l10-6M16 18v26"/></g></svg><span>RUN</span></div>

<div class="ctx" role="menu">
 <button class="fw-bold"><span class="ic"></span>Open</button>
 <button><span class="ic"><svg class="s16"><use href="#shield"/></svg></span>Run as administrator</button>
 <button><span class="ic"></span>Troubleshoot compatibility</button>
 <button><span class="ic"></span>Pin to Start</button>
 <button><span class="ic"><svg class="s16"><use href="#npp"/></svg></span>Edit with Notepad++</button>
 <button><span class="ic"><svg class="s16"><use href="#share"/></svg></span>Share</button>
 <hr>
 <button><span class="ic"></span>Give access to<svg class="ms-auto" width="8" height="14" viewBox="0 0 8 14"><path d="M1 1l6 6-6 6" fill="none" stroke="#333"/></svg></button>
 <button><span class="ic"><svg class="s16"><use href="#rar"/></svg></span>Add to archive...</button>
 <button><span class="ic"><svg class="s16"><use href="#rar"/></svg></span>Add to "OmenSuperHub.rar"</button>
 <button><span class="ic"><svg class="s16"><use href="#rar"/></svg></span>Compress and email...</button>
 <button><span class="ic"><svg class="s16"><use href="#rar"/></svg></span>Compress to "OmenSuperHub.rar" and email</button>
 <button><span class="ic"></span>Pin to taskbar</button>
 <button><span class="ic"></span>Restore previous versions</button>
 <hr>
 <button><span class="ic"></span>Send to<svg class="ms-auto" width="8" height="14" viewBox="0 0 8 14"><path d="M1 1l6 6-6 6" fill="none" stroke="#333"/></svg></button>
 <hr>
 <button><span class="ic"></span>Cut</button>
 <button><span class="ic"></span>Copy</button>
 <hr>
 <button><span class="ic"></span>Create shortcut</button>
 <button><span class="ic"></span>Delete</button>
 <button><span class="ic"></span>Rename</button>
 <hr>
 <button><span class="ic"></span>Properties</button>
</div>

<footer class="taskbar d-flex">
 <button class="tbtn" aria-label="Start"><svg class="s16" viewBox="0 0 16 16"><path d="M0 2l7-1v6.500H0zM8 1l8-1v7.500H8zM0 8.500h7V15l-7-1zM8 8.500h8V16l-8-1z" fill="#fff"/></svg></button>
 <label class="tsearch d-flex align-items-center">
  <svg width="40" height="24" viewBox="0 0 40 24"><circle cx="22" cy="9" r="5.500" fill="none" stroke="#222" stroke-width="1.300"/><path d="M18 13l-6 6" stroke="#222" stroke-width="1.500"/></svg>
  <input placeholder="Type here to search" aria-label="Type here to search">
  <svg width="72" height="34" viewBox="0 0 72 34"><path d="M4 12h20v18L4 31z" fill="#10866a"/><path d="M4 17l10 6 10-6M4 24l10 6 10-6" fill="none" stroke="#fff" stroke-width="2"/><path d="M6 12q-3-8 3-5 2-5 6 1 5-5 7-2 3 1 0 6z" fill="#c83a2d"/><path d="M27 9h24l-2 22-17 2z" fill="#cf3429"/><path d="M27 8h25v6H27z" fill="#e4523d"/><path d="M36 8h4v25h-4zM46 8h3v24h-3z" fill="#e9b84f"/><path d="M39 8q-12-9-10-3 1 4 10 3 10-9 12-4-1 5-12 4z" fill="none" stroke="#e2a83e" stroke-width="2.500"/><path d="M53 18h14v10l-14 2z" fill="#8293c9"/><path d="M53 20h14M60 16v13" stroke="#e65b5b" stroke-width="2"/><path d="M55 16q-1-5 5-2 5-4 6 1z" fill="#d9443d"/></svg>
 </label>
 <button class="tbtn" aria-label="Task View"><svg class="s16" viewBox="0 0 16 16"><path d="M.5 1v2h10V1M.5 15v-2h10v2M.5 5.500h10v5H.5zM14.500 1v14M13 5h3" fill="none" stroke="#fff"/></svg></button>
 <button class="tbtn ms-1" aria-label="Microsoft Edge"><svg class="s24"><use href="#edge"/></svg></button>
 <button class="tbtn on" aria-label="File Explorer"><svg class="s24"><use href="#explore"/></svg></button>
 <button class="tbtn" aria-label="Firefox"><svg class="s24"><use href="#fox"/></svg></button>
 <div class="tray d-flex ms-auto">
  <button aria-label="Hidden icons"><svg class="s16" viewBox="0 0 16 16"><path d="M2 11l6-6 6 6" fill="none" stroke="#fff" stroke-width="1.300"/></svg></button>
  <button aria-label="OmenSuperHub"><svg class="s16"><use href="#fan"/></svg></button>
  <button aria-label="Meet now"><svg class="s16" viewBox="0 0 16 16"><path d="M2.500 5.500h8v6h-8zM10.500 8l3-2v5l-3-2M4 3q4-4 8 0M4 14q4 3 8 0" fill="none" stroke="#fff"/></svg></button>
  <button aria-label="Volume"><svg class="s16" viewBox="0 0 16 16"><path d="M.5 5.500h3l4-4v13l-4-4h-3zM9.500 6q1.500 2 0 4M11.500 4q3 4 0 8M13.500 2q4.500 6 0 12" fill="none" stroke="#fff"/></svg></button>
  <button aria-label="Network"><svg class="s16" viewBox="0 0 16 16"><path d="M5 3.500h10.500v8h-12V7M.5 1.500h4v4h-4zM9.500 12v3M6 14.500h7" fill="none" stroke="#fff"/></svg></button>
  <div class="clock align-self-center">12:18 PM<br>3/6/2026</div>
  <button class="notify" aria-label="Notifications"><svg class="s16" viewBox="0 0 16 16"><path d="M.5 1.500h15v11H10l-2 3-2-3H.5z" fill="none" stroke="#fff"/></svg></button>
  <div class="show-desk border-start border-secondary"></div>
 </div>
</footer>
</body>
</html>
